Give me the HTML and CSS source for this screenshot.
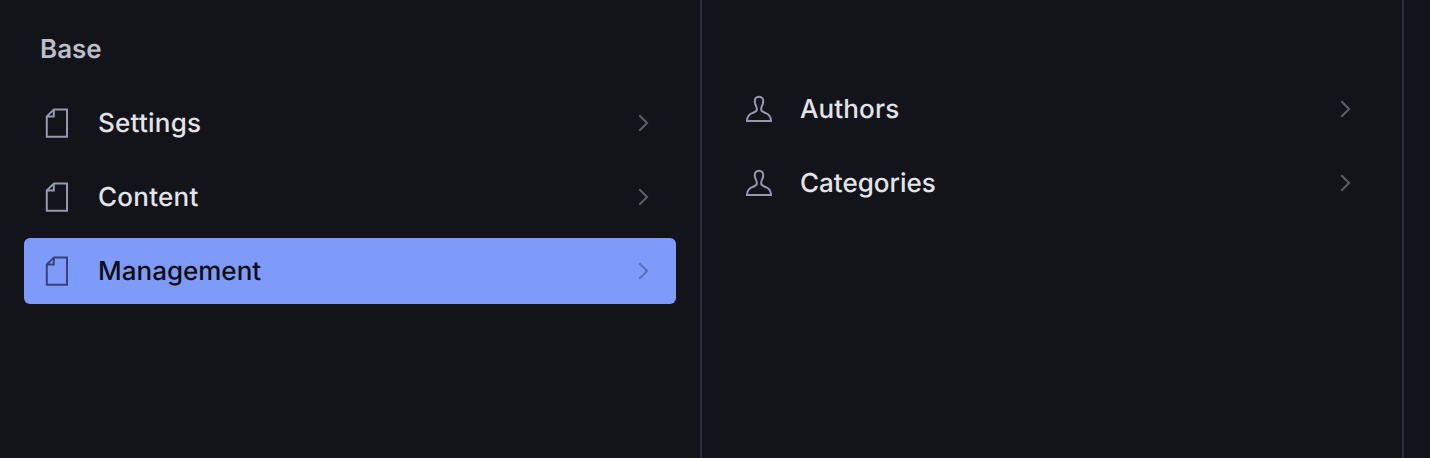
FILE: index.html
```html
<!DOCTYPE html>
<html lang="en">
<head>
<meta charset="utf-8">
<title>Base</title>
<link rel="stylesheet" href="styles.css">
</head>
<body>
<svg class="defs" width="0" height="0">
  <symbol id="doc" viewBox="0 0 42 42"><path stroke-linejoin="miter" stroke-miterlimit="2" d="M18 7.400H31V34.700H10.800V14.400L18 7.400ZM17.800 7.600V14.400H10.800"/></symbol>
  <symbol id="user" viewBox="0 0 42 42"><path d="M21 8.700C17.900 8.700 16.700 10.800 16.800 13.600C16.900 16.800 18.900 18.500 18.900 21.300C18.900 23.800 16.500 24.200 14.200 25.100C11 26.300 9.200 28 9 33H33C32.800 28 31 26.300 27.800 25.100C25.500 24.200 23.100 23.800 23.100 21.300C23.100 18.500 25.100 16.800 25.200 13.600C25.300 10.800 24.100 8.700 21 8.700Z"/></symbol>
  <symbol id="chevron" viewBox="0 0 42 42"><path d="M17.300 13.200L25.100 21L17.300 28.800"/></symbol>
</svg>
<main class="panes">
  <section class="pane">
    <h1 class="title">Base</h1>
    <nav class="list">
      <a class="item"><svg class="icon"><use href="#doc"/></svg><span class="label wide">Settings</span><svg class="icon arrow"><use href="#chevron"/></svg></a>
      <a class="item"><svg class="icon"><use href="#doc"/></svg><span class="label wide">Content</span><svg class="icon arrow"><use href="#chevron"/></svg></a>
      <a class="item selected"><svg class="icon"><use href="#doc"/></svg><span class="label">Management</span><svg class="icon arrow"><use href="#chevron"/></svg></a>
    </nav>
  </section>
  <section class="pane untitled">
    <nav class="list">
      <a class="item"><svg class="icon"><use href="#user"/></svg><span class="label semiwide">Authors</span><svg class="icon arrow"><use href="#chevron"/></svg></a>
      <a class="item"><svg class="icon"><use href="#user"/></svg><span class="label">Categories</span><svg class="icon arrow"><use href="#chevron"/></svg></a>
    </nav>
  </section>
</main>
</body>
</html>
```
FILE: styles.css
```css
* { box-sizing: border-box; }
body {
  margin: 0;
  background: #13141a;
  color: #e3e4e8;
  font-family: Inter, sans-serif;
  font-size: 26px;
  font-weight: 500;
  text-rendering: geometricPrecision;
  overflow: hidden;
}
.defs { display: none; }
.panes { display: flex; height: 458px; }
.pane {
  width: 702px;
  flex: none;
  padding: 29px 24px 0;
  border-right: 2px solid #2c2c3e;
}
.untitled { padding-top: 76px; }
.title {
  margin: 0 0 19px;
  padding-left: 16px;
  font-size: 26px;
  line-height: 42px;
  font-weight: 600;
  color: #bbbdc9;
}
.list { display: flex; flex-direction: column; gap: 8px; }
.item {
  display: flex;
  align-items: center;
  height: 66px;
  padding: 0 12px;
  border-radius: 6px;
}
.icon {
  width: 42px;
  height: 42px;
  flex: none;
  fill: none;
  stroke: #9499ad;
  stroke-width: 2;
}
.label { flex: 1; margin-left: 20px; padding-top: 2px; line-height: 32px; }
.wide { letter-spacing: 0.25px; }
.semiwide { letter-spacing: 0.13px; }
.arrow { stroke: #5b5d69; }
.selected { background: #7f9bf9; color: #0d0e12; }
.selected .icon { stroke: #38437b; }
.selected .arrow { stroke: #5b6fb7; }
```
